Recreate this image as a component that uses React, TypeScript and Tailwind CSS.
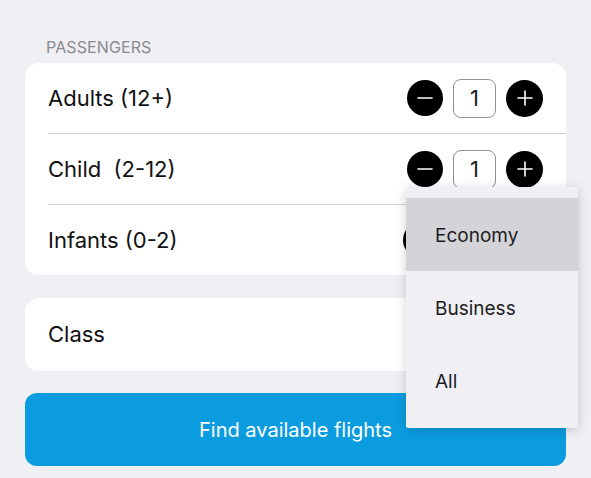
import React from 'react';

const font = { fontFamily: 'Inter, "Liberation Sans", sans-serif' };

const Stepper = ({ value }: { value: number }) => (
  <div className="flex items-center gap-[10px]">
    <button className="flex h-[36px] w-[36px] items-center justify-center rounded-full bg-black">
      <svg width="18" height="18" viewBox="0 0 18 18">
        <path d="M2 9h14" stroke="white" strokeWidth="1.6" strokeLinecap="round" />
      </svg>
    </button>
    <div className="flex h-[39px] w-[43px] items-center justify-center rounded-[8px] border-[1.5px] border-[#8e8e93] text-[22px] text-[#1c1c1e]">
      {value}
    </div>
    <button className="flex h-[37px] w-[37px] items-center justify-center rounded-full bg-black">
      <svg width="18" height="18" viewBox="0 0 18 18">
        <path d="M2 9h14M9 2v14" stroke="white" strokeWidth="1.6" strokeLinecap="round" />
      </svg>
    </button>
  </div>
);

const rows = [
  { label: 'Adults (12+)', value: 1, pad: 'pr-[23px]' },
  { label: 'Child  (2-12)', value: 1, pad: 'pr-[23px]' },
  { label: 'Infants (0-2)', value: 0, pad: 'pr-[27px]' },
];

export default function App() {
  return (
    <div className="relative h-[478px] w-[591px] overflow-hidden bg-[#efeff4] px-[25px]" style={font}>
      <div className="pl-[21px] pt-[37px] text-[16px] leading-[20px] tracking-[0.1px] text-[#8a8a8e]">PASSENGERS</div>

      {/* passengers card */}
      <div className="mt-[6px] rounded-[14px] bg-white">
        {rows.map((r, i) => (
          <div key={r.label} className="ml-[23px]">
            <div
              className={
                'flex items-center justify-between ' +
                r.pad +
                (i < rows.length - 1 ? ' h-[71px] border-b border-[#d1d1d6]' : ' h-[70px]')
              }
            >
              <span className="whitespace-pre text-[22px] text-[#111]">{r.label}</span>
              <Stepper value={r.value} />
            </div>
          </div>
        ))}
      </div>

      {/* class card */}
      <div className="mt-[23px] flex h-[73px] items-center rounded-[14px] bg-white pl-[23px]">
        <span className="text-[22px] text-[#111]">Class</span>
      </div>

      <button className="mt-[22px] flex h-[73px] w-full items-center justify-center rounded-[12px] bg-[#0b9ce0] text-[20px] text-white">
        Find available flights
      </button>

      {/* class dropdown */}
      <div className="absolute left-[406px] top-[187px] w-[172px] rounded-[2px] bg-[#f0eff4] py-[11px] shadow-[0_2px_12px_rgba(0,0,0,0.18)]">
        {['Economy', 'Business', 'All'].map((c, i) => (
          <div
            key={c}
            className={
              'flex h-[73px] items-center pl-[29px] pt-[4px] text-[19px] text-[#1c1c1e] ' + (i === 0 ? 'bg-[#d4d4d8]' : '')
            }
          >
            {c}
          </div>
        ))}
      </div>
    </div>
  );
}
